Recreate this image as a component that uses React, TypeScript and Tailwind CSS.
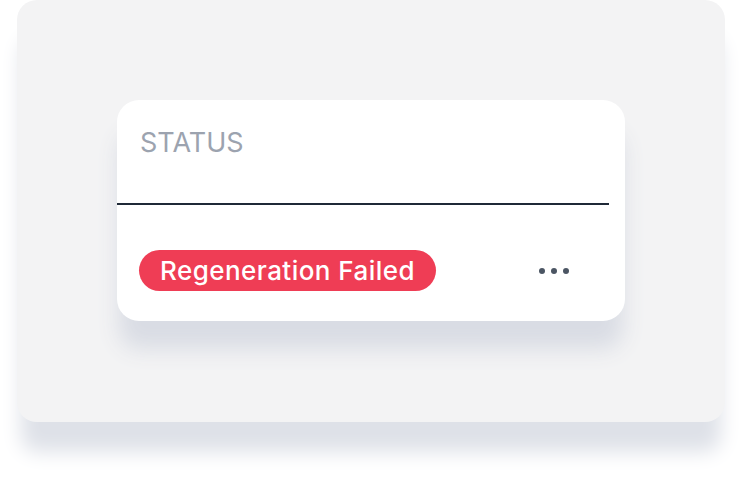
import React from "react"

function Dots() {
  return (
    <div className="flex items-center gap-[6px] mr-[56px]">
      <span className="w-[6px] h-[6px] rounded-full bg-[#4b5563]" />
      <span className="w-[6px] h-[6px] rounded-full bg-[#4b5563]" />
      <span className="w-[6px] h-[6px] rounded-full bg-[#4b5563]" />
    </div>
  )
}

function StatusCard() {
  return (
    <div className="w-[508px] h-[221px] bg-white rounded-[22px] shadow-[0_30px_22px_-2px_#d9dce4] flex flex-col">
      <div className="h-[105px] mr-4 border-b-2 border-[#1f2937] pl-[23px] pt-[25px]">
        <span className="text-[27px] leading-[36px] text-[#9ca3af]">STATUS</span>
      </div>
      <div className="flex items-center justify-between pl-[22px] pt-[45px]">
        <span className="h-[41px] px-[21px] rounded-full bg-[#ef3d55] text-white text-[26px] font-medium tracking-[0.45px] leading-[41px] whitespace-nowrap">
          Regeneration Failed
        </span>
        <Dots />
      </div>
    </div>
  )
}

export default function App() {
  return (
    <div className="w-[742px] h-[481px] bg-white" style={{ fontFamily: "Inter, 'Noto Sans', sans-serif" }}>
      <div className="ml-[17px] w-[708px] h-[422px] rounded-[20px] bg-[#f3f3f4] shadow-[0_34px_20px_-4px_#dee1e8] pt-[100px] pl-[100px]">
        <StatusCard />
      </div>
    </div>
  )
}
